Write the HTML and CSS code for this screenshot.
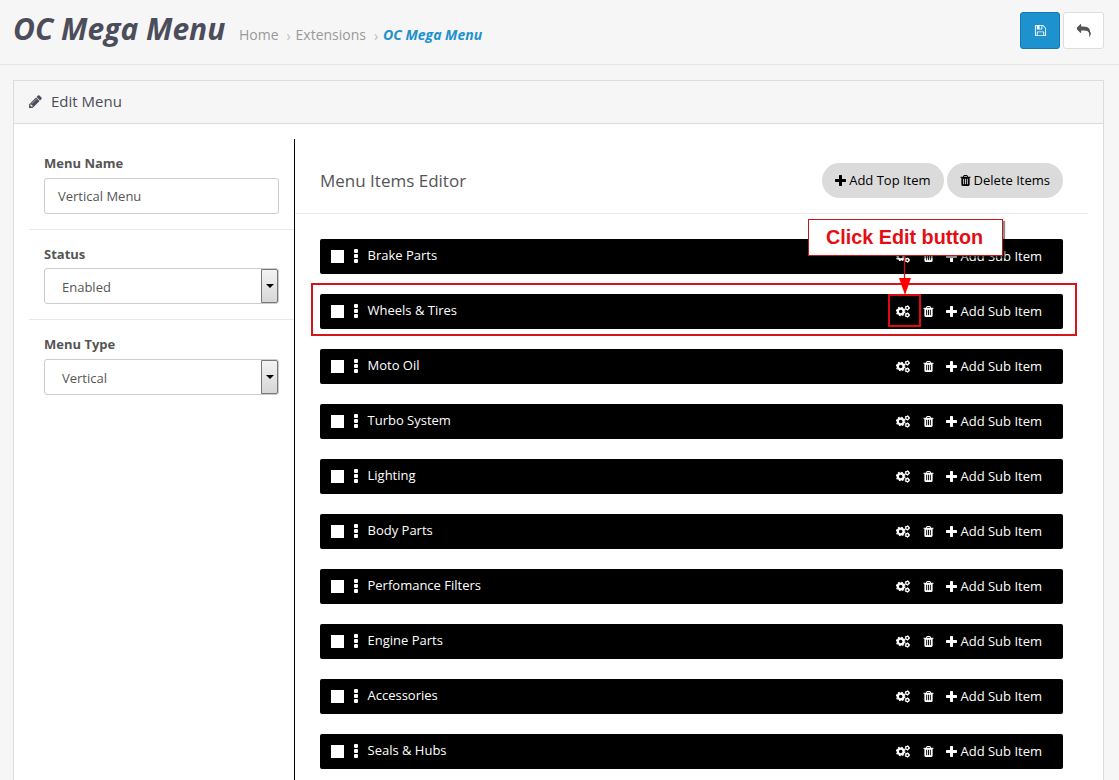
FILE: index.html
```html
<!DOCTYPE html>
<html lang="en">
<head>
<meta charset="utf-8">
<title>OC Mega Menu</title>
<link rel="stylesheet" href="styles.css">
</head>
<body>
<svg class="sprite" aria-hidden="true">
  <symbol id="pencil" viewBox="0 0 1792 1792"><path d="M491 1536l91-91-235-235-91 91v107h128v128h107zm523-928q0-22-22-22-10 0-17 7l-542 542q-7 7-7 17 0 22 22 22 10 0 17-7l542-542q7-7 7-17zm-54-192l416 416-832 832h-416v-416zm683 96q0 53-37 90l-166 166-416-416 166-165q36-38 90-38 53 0 91 38l235 234q37 39 37 91z"/></symbol>
  <symbol id="reply" viewBox="0 0 1792 1792"><path d="M1792 1120q0 166-127 451-3 7-10.500 24t-13.500 30-13 22q-12 17-28 17-15 0-23.500-10t-8.500-25q0-9 2.500-26.500t2.500-23.500q5-68 5-123 0-112-19.500-200.500t-54-153.500-89-112-117-78.500-152.500-49.500-179.500-24-212-7h-224v256q0 26-19 45t-45 19-45-19l-512-512q-19-19-19-45t19-45l512-512q19-19 45-19t45 19 19 45v256h224q713 0 875 403 53 134 53 333z"/></symbol>
  <symbol id="save" viewBox="0 0 1792 1792"><path d="M512 1536h768v-384h-768v384zm896 0h128v-896q0-14-10-38.500t-20-34.500l-281-281q-10-10-34-20t-39-10v416q0 40-28 68t-68 28h-576q-40 0-68-28t-28-68v-416h-128v1280h128v-416q0-40 28-68t68-28h832q40 0 68 28t28 68v416zm-384-928v-320q0-13-9.500-22.500t-22.500-9.500h-192q-13 0-22.500 9.500t-9.500 22.500v320q0 13 9.500 22.500t22.500 9.500h192q13 0 22.500-9.500t9.500-22.500zm640 32v928q0 40-28 68t-68 28h-1344q-40 0-68-28t-28-68v-1344q0-40 28-68t68-28h928q40 0 88 20t76 48l280 280q28 28 48 76t20 88z"/></symbol>
  <symbol id="plus" viewBox="192 128 1408 1408"><path d="M1600 736v192q0 40-28 68t-68 28h-416v416q0 40-28 68t-68 28h-192q-40 0-68-28t-28-68v-416h-416q-40 0-68-28t-28-68v-192q0-40 28-68t68-28h416v-416q0-40 28-68t68-28h192q40 0 68 28t28 68v416h416q40 0 68 28t28 68z"/></symbol>
  <symbol id="trash" viewBox="192 128 1408 1536"><path d="M704 1376v-704q0-14-9-23t-23-9h-64q-14 0-23 9t-9 23v704q0 14 9 23t23 9h64q14 0 23-9t9-23zm256 0v-704q0-14-9-23t-23-9h-64q-14 0-23 9t-9 23v704q0 14 9 23t23 9h64q14 0 23-9t9-23zm256 0v-704q0-14-9-23t-23-9h-64q-14 0-23 9t-9 23v704q0 14 9 23t23 9h64q14 0 23-9t9-23zm-544-992h448l-48-117q-7-9-17-11h-317q-10 2-17 11zm928 32v64q0 14-9 23t-23 9h-96v948q0 83-47 143.500t-113 60.500h-832q-66 0-113-58.500t-47-141.500v-952h-96q-14 0-23-9t-9-23v-64q0-14 9-23t23-9h309l70-167q15-37 54-63t79-26h320q40 0 79 26t54 63l70 167h309q14 0 23 9t9 23z"/></symbol>
  <symbol id="cogs" viewBox="0 0 14 13">
    <g fill="none" stroke="currentColor">
      <circle cx="4.700" cy="6.500" r="2.900" stroke-width="2.200"/>
      <circle cx="4.700" cy="6.500" r="4.200" stroke-width="1.200" stroke-dasharray="1.649"/>
      <circle cx="11.300" cy="2.900" r="1.600" stroke-width="1.300"/>
      <circle cx="11.300" cy="2.900" r="2.300" stroke-width=".8" stroke-dasharray="1.204"/>
      <circle cx="11.300" cy="10.100" r="1.600" stroke-width="1.300"/>
      <circle cx="11.300" cy="10.100" r="2.300" stroke-width=".8" stroke-dasharray="1.204"/>
    </g>
  </symbol>
</svg>

<header class="page-header">
  <h1 class="title">OC Mega Menu</h1>
  <nav class="crumbs">
    <a>Home</a><span class="sep">›</span><a>Extensions</a><span class="sep">›</span><a class="current">OC Mega Menu</a>
  </nav>
  <div class="header-actions">
    <button class="btn btn-primary" aria-label="Save"><svg class="i13"><use href="#save"/></svg></button>
    <button class="btn" aria-label="Back"><svg class="i14"><use href="#reply"/></svg></button>
  </div>
</header>

<main class="panel">
  <div class="panel-heading"><svg class="i15"><use href="#pencil"/></svg><span>Edit Menu</span></div>
  <div class="panel-body">
    <aside class="settings">
      <div class="field"><label>Menu Name</label><div class="control">Vertical Menu</div></div>
      <div class="field status"><label>Status</label><div class="control select"><span>Enabled</span><i class="drop"></i></div></div>
      <div class="field"><label>Menu Type</label><div class="control select"><span>Vertical</span><i class="drop"></i></div></div>
    </aside>
    <section class="editor">
      <div class="editor-head">
        <h2>Menu Items Editor</h2>
        <button class="pill"><svg class="plus"><use href="#plus"/></svg>Add Top Item</button>
        <button class="pill"><svg class="trash"><use href="#trash"/></svg>Delete Items</button>
      </div>
      <div class="items" id="items"></div>
      <div class="outline-row"></div>
      <div class="outline-icon"></div>
      <div class="callout">Click Edit button</div>
      <svg class="arrow" viewBox="0 0 12 40"><path d="M5.500 0V24" stroke="#d00f14" stroke-width="1.300"/><path d="M0 22H12L6 39Z" fill="#f00"/></svg>
    </section>
  </div>
</main>
<script src="items.js"></script>
</body>
</html>
```
FILE: styles.css
```css
* { box-sizing: border-box; }
body { margin: 0; height: 780px; overflow: hidden; background: #f6f6f6; font: 13px/20px "Open Sans", sans-serif; color: #555; }
.sprite { position: absolute; width: 0; height: 0; }
svg { fill: currentColor; flex: none; }
button { font: inherit; }
.page-header { display: flex; align-items: flex-start; height: 65px; padding: 12px 15px 0 13px; border-bottom: 1px solid #e5e5e5; }
.title { margin: 0; width: 226px; font-size: 30px; line-height: 33px; font-weight: 700; font-style: italic; color: #4c4d5a; white-space: nowrap; }
.crumbs { display: flex; padding-top: 13px; font-size: 14px; color: #999; white-space: nowrap; }
.sep { width: 17px; padding: 1px 0 0 8px; color: #bbb; }
.crumbs .current { color: #1e91cf; font-weight: 700; font-style: italic; }
.header-actions { display: flex; gap: 3px; margin-left: auto; }
.btn { display: flex; align-items: center; justify-content: center; width: 41px; height: 37px; padding: 0; border: 1px solid #ddd; border-radius: 3px; background: #fff; color: #555; }
.btn-primary { width: 40px; background: #1e91cf; border-color: #1978ab; color: #fff; }
.i13 { width: 13px; height: 13px; }
.i14 { width: 14px; height: 14px; }
.i15 { width: 15px; height: 15px; }
.panel { margin: 15px 15px 0 13px; height: 720px; background: #fff; border: 1px solid #dcdcdc; }
.panel-heading { display: flex; align-items: center; gap: 8px; height: 43px; padding: 0 14px 2px; border-bottom: 1px solid #dcdcdc; background: #f6f6f6; font-size: 15px; color: #4c4d5a; }
.panel-body { display: flex; height: 670px; padding: 15px 15px 0; }
.settings { width: 266px; border-right: 1px solid #000; }
.field { height: 90px; padding: 14px 15px 0; }
.field + .field { border-top: 1px solid #e9e9e9; }
.field label { display: block; height: 25px; font-weight: 700; }
.field.status label { height: 24px; }
.control { display: flex; align-items: center; width: 235px; height: 36px; padding-left: 13px; border: 1px solid #ccc; border-radius: 3px; }
.select { justify-content: space-between; padding-left: 17px; }
.select span { padding-top: 2px; }
.drop { display: flex; align-items: center; justify-content: center; width: 17px; height: 34px; border: 1px solid #777; border-radius: 0 2px 2px 0; background: linear-gradient(#f3f3f3, #d6d6d6); }
.drop::before { content: ""; border: 4px solid transparent; border-top-color: #000; border-bottom: 0; }
.editor { position: relative; width: 793px; }
.editor-head { display: flex; align-items: center; gap: 3px; height: 75px; padding: 8px 25px 0 25px; border-bottom: 1px solid #e9e9e9; }
.editor-head h2 { flex: 1; margin: 1px 0 0; font-size: 17px; font-weight: 400; }
.pill { display: flex; align-items: center; gap: 3px; height: 35px; padding: 0 13px; border: 0; border-radius: 18px; background: #dbdbdb; color: #000; white-space: nowrap; }
.plus { width: 11px; height: 11px; }
.trash { width: 10px; height: 11px; }
.pill .trash { width: 11px; }
.items { display: flex; flex-direction: column; gap: 20px; padding: 25px 25px 0; }
.item { display: flex; align-items: center; height: 35px; padding: 0 21px 0 11px; border-radius: 2px; background: #000; color: #fff; }
.check { width: 13px; height: 13px; background: #fff; }
.grip { display: flex; flex-direction: column; gap: 1px; width: 4px; margin: 0 9.500px 0 10px; padding-bottom: 1px; }
.grip i { height: 4px; background: #fff; border-radius: 1px; }
.name { flex: 1; padding-bottom: 3px; }
.item span:last-child { padding-bottom: 2px; }
.cogs { width: 14px; height: 13px; margin-right: 13px; }
.item .trash { width: 11px; margin-right: 12px; }
.item .plus { margin-right: 3px; }
.outline-row { position: absolute; left: 16px; top: 144px; width: 766px; height: 53px; border: 2px solid #d4151a; }
.outline-icon { position: absolute; left: 593px; top: 155px; width: 33px; height: 33px; border: 2px solid #e2090e; }
.callout { position: absolute; left: 513px; top: 80px; width: 195px; height: 37px; border: 1px solid #c8161b; background: #fff; box-shadow: 2px 2px 1px rgba(0,0,0,.45); color: #e60d12; font: 700 19.800px/35px "Liberation Sans", sans-serif; text-align: center; padding-right: 2px; white-space: nowrap; }
.arrow { position: absolute; left: 604px; top: 117px; width: 12px; height: 40px; }
```
FILE: items.js
```js
const names = ["Brake Parts", "Wheels & Tires", "Moto Oil", "Turbo System", "Lighting", "Body Parts", "Perfomance Filters", "Engine Parts", "Accessories", "Seals & Hubs"];
const list = document.getElementById("items");
for (const name of names) {
  const row = document.createElement("div");
  row.className = "item";
  row.innerHTML = '<span class="check"></span><span class="grip"><i></i><i></i><i></i></span><span class="name"></span>' +
    '<svg class="cogs"><use href="#cogs"/></svg><svg class="trash"><use href="#trash"/></svg><svg class="plus"><use href="#plus"/></svg><span>Add Sub Item</span>';
  row.querySelector(".name").textContent = name;
  list.appendChild(row);
}
```
